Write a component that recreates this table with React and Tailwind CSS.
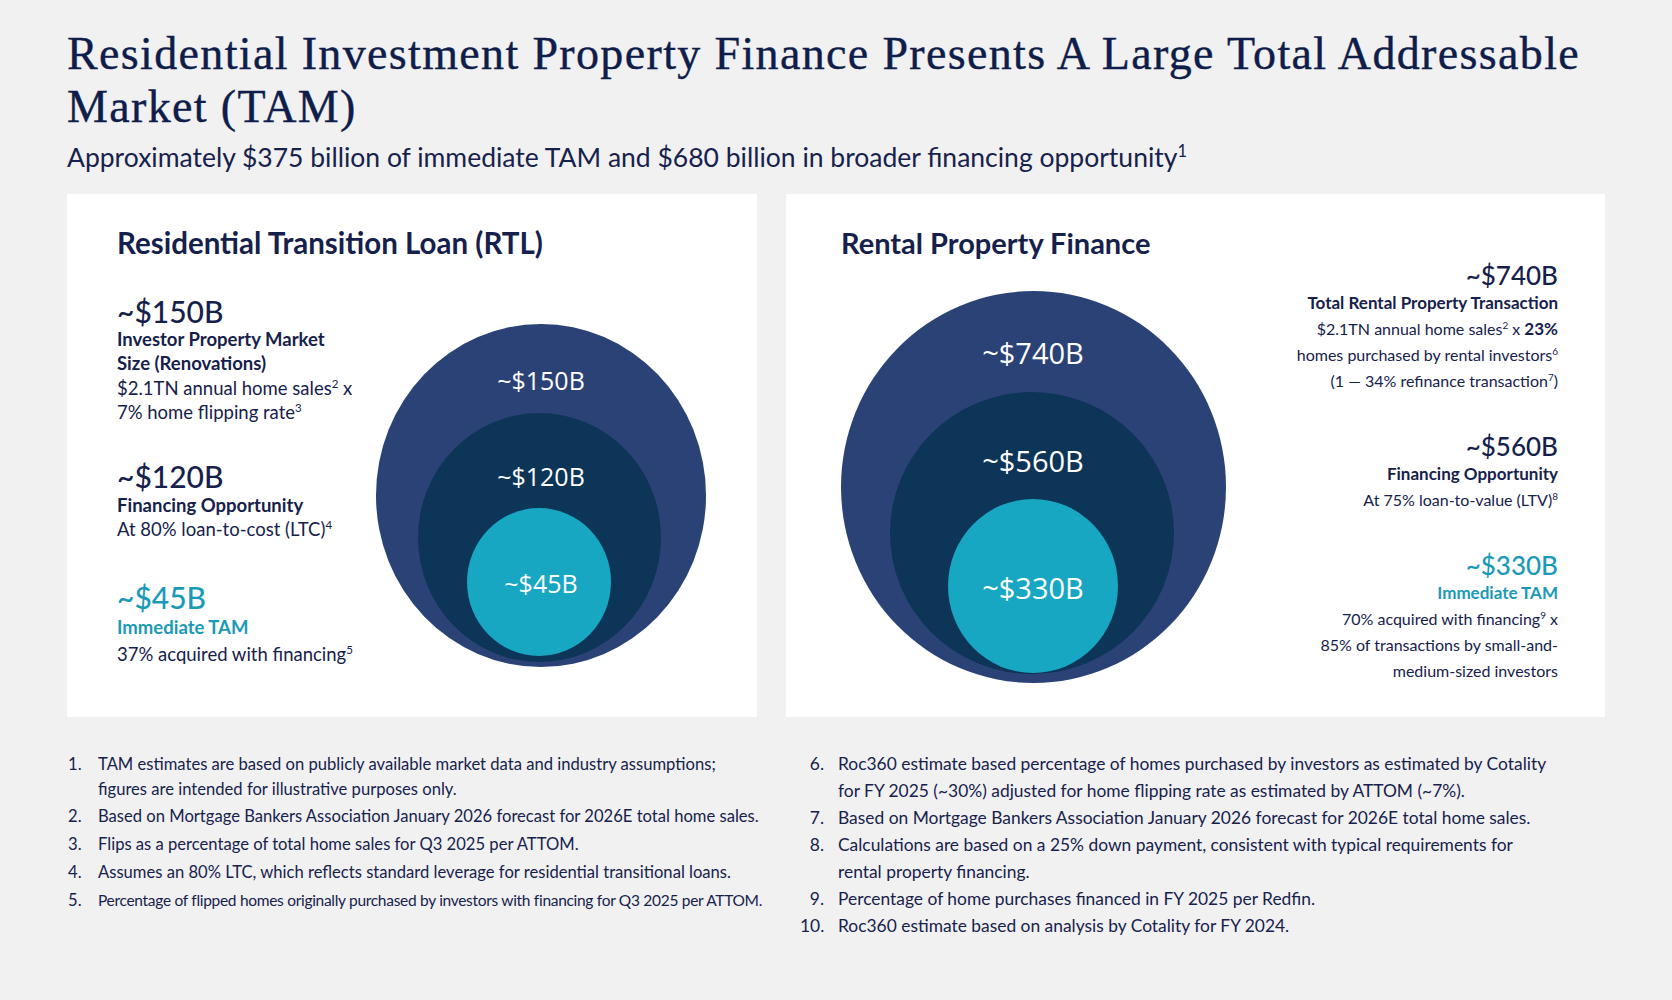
import React from "react";

const sans = { fontFamily: "Lato, 'Open Sans', sans-serif" };

function Sup({ children }) {
  return <sup className="text-[0.62em] align-super leading-none" style={{ top: 0 }}>{children}</sup>;
}

function LeftCircles() {
  return (
    <svg width="330" height="343" viewBox="0 0 330 343" className="shrink-0">
      <ellipse cx="165" cy="171.5" rx="165" ry="171.5" fill="#2b4276" />
      <ellipse cx="163.5" cy="213.5" rx="121.5" ry="124.5" fill="#0c3557" />
      <ellipse cx="163" cy="258" rx="72" ry="74" fill="#17a7c3" />
      <g fill="#ffffff" fontFamily="'Open Sans', sans-serif" fontSize="25" textAnchor="middle" dominantBaseline="central">
        <text x="165" y="56">~$150B</text>
        <text x="165" y="152">~$120B</text>
        <text x="165" y="259">~$45B</text>
      </g>
    </svg>
  );
}

function RightCircles() {
  return (
    <svg width="385" height="392" viewBox="0 0 385 392" className="shrink-0">
      <ellipse cx="192.5" cy="196" rx="192.5" ry="196" fill="#2b4276" />
      <ellipse cx="191" cy="242" rx="142" ry="141" fill="#0c3557" />
      <ellipse cx="192" cy="295" rx="85" ry="87" fill="#17a7c3" />
      <g fill="#ffffff" fontFamily="'Open Sans', sans-serif" fontSize="29" textAnchor="middle" dominantBaseline="central">
        <text x="192" y="61">~$740B</text>
        <text x="192" y="169">~$560B</text>
        <text x="192" y="296">~$330B</text>
      </g>
    </svg>
  );
}

export default function App() {
  return (
    <div className="w-[1672px] h-[1000px] bg-[#f1f1f2] text-[#16214b] overflow-hidden" style={sans}>
      <div className="pl-[67px] pt-[27px]">
        <h1
          className="text-[46px] leading-[53px] text-[#0f1d4a] tracking-[1.35px] [-webkit-text-stroke:0.4px_#0f1d4a]"
          style={{ fontFamily: "'Liberation Serif', 'Times New Roman', serif" }}
        >
          Residential Investment Property Finance Presents A Large Total Addressable
          <br />
          Market (TAM)
        </h1>
        <p className="text-[26.5px] leading-[32px] mt-[8px] text-[#17224c]">
          Approximately $375 billion of immediate TAM and $680 billion in broader financing opportunity<Sup>1</Sup>
        </p>
      </div>

      <div className="flex gap-[29px] pl-[67px] mt-[21px]">
        {/* Left card */}
        <div className="w-[690px] h-[523px] bg-white pl-[50px] pr-[51px] pt-[32px]">
          <h2 className="text-[29.5px] leading-[34px] font-bold text-[#16214b]">Residential Transition Loan (RTL)</h2>
          <div className="flex justify-between">
            <div className="pt-[36px] text-[18.5px] leading-[24px]">
              <div className="text-[30px] leading-[30px] font-medium">~$150B</div>
              <div className="font-bold mt-[1px]">Investor Property Market</div>
              <div className="font-bold">Size (Renovations)</div>
              <div className="mt-[1px]">$2.1TN annual home sales<Sup>2</Sup> x</div>
              <div>7% home flipping rate<Sup>3</Sup></div>

              <div className="text-[30px] leading-[30px] font-medium mt-[37px]">~$120B</div>
              <div className="font-bold mt-[2px]">Financing Opportunity</div>
              <div>At 80% loan-to-cost (LTC)<Sup>4</Sup></div>

              <div className="text-[30px] leading-[30px] font-medium mt-[41px] text-[#1a9ab6]">~$45B</div>
              <div className="font-bold mt-[3px] text-[#1a9ab6]">Immediate TAM</div>
              <div className="mt-[3px]">37% acquired with financing<Sup>5</Sup></div>
            </div>
            <div className="pt-[64px]">
              <LeftCircles />
            </div>
          </div>
        </div>

        {/* Right card */}
        <div className="w-[819px] h-[523px] bg-white pl-[55px] pr-[47px] flex justify-between">
          <div className="pt-[32px]">
            <h2 className="text-[29px] leading-[34px] font-bold text-[#16214b]">Rental Property Finance</h2>
            <div className="mt-[31px]">
              <RightCircles />
            </div>
          </div>
          <div className="pt-[66px] text-right text-[16px] leading-[26px]">
            <div className="text-[26px] leading-[30px] font-medium">~$740B</div>
            <div className="font-bold text-[17px]">Total Rental Property Transaction</div>
            <div>$2.1TN annual home sales<Sup>2</Sup> x <span className="font-bold text-[17px]">23%</span></div>
            <div>homes purchased by rental investors<Sup>6</Sup></div>
            <div>(1 — 34% refinance transaction<Sup>7</Sup>)</div>

            <div className="text-[26px] leading-[30px] font-medium mt-[37px]">~$560B</div>
            <div className="font-bold text-[17px]">Financing Opportunity</div>
            <div>At 75% loan-to-value (LTV)<Sup>8</Sup></div>

            <div className="text-[26px] leading-[30px] font-medium mt-[37px] text-[#1a9ab6]">~$330B</div>
            <div className="font-bold text-[17px] text-[#1a9ab6]">Immediate TAM</div>
            <div>70% acquired with financing<Sup>9</Sup> x</div>
            <div>85% of transactions by small-and-</div>
            <div>medium-sized investors</div>
          </div>
        </div>
      </div>

      <div className="flex pl-[68px] mt-[33px] text-[#17224c]">
        <ol className="w-[732px] flex flex-col gap-[3px] leading-[25px] text-[16.6px] pt-[2px]">
          {[
            "TAM estimates are based on publicly available market data and industry assumptions; figures are intended for illustrative purposes only.",
            "Based on Mortgage Bankers Association January 2026 forecast for 2026E total home sales.",
            "Flips as a percentage of total home sales for Q3 2025 per ATTOM.",
            "Assumes an 80% LTC, which reflects standard leverage for residential transitional loans.",
            "Percentage of flipped homes originally purchased by investors with financing for Q3 2025 per ATTOM.",
          ].map((t, i) => (
            <li key={i} className="flex">
              <span className="w-[30px] shrink-0">{i + 1}.</span>
              <span
                className={
                  i === 0
                    ? "w-[640px] leading-[24.5px]"
                    : i === 4
                    ? "text-[15.5px] tracking-[-0.3px] whitespace-nowrap"
                    : "whitespace-nowrap"
                }
              >
                {t}
              </span>
            </li>
          ))}
        </ol>
        <ol className="w-[800px] flex flex-col leading-[27px] text-[17.4px]">
          {[
            "Roc360 estimate based percentage of homes purchased by investors as estimated by Cotality for FY 2025 (~30%) adjusted for home flipping rate as estimated by ATTOM (~7%).",
            "Based on Mortgage Bankers Association January 2026 forecast for 2026E total home sales.",
            "Calculations are based on a 25% down payment, consistent with typical requirements for rental property financing.",
            "Percentage of home purchases financed in FY 2025 per Redfin.",
            "Roc360 estimate based on analysis by Cotality for FY 2024.",
          ].map((t, i) => (
            <li key={i} className="flex">
              <span className="w-[38px] shrink-0 text-right pr-[14px]">{i + 6}.</span>
              <span className="w-[715px]">{t}</span>
            </li>
          ))}
        </ol>
      </div>
    </div>
  );
}
